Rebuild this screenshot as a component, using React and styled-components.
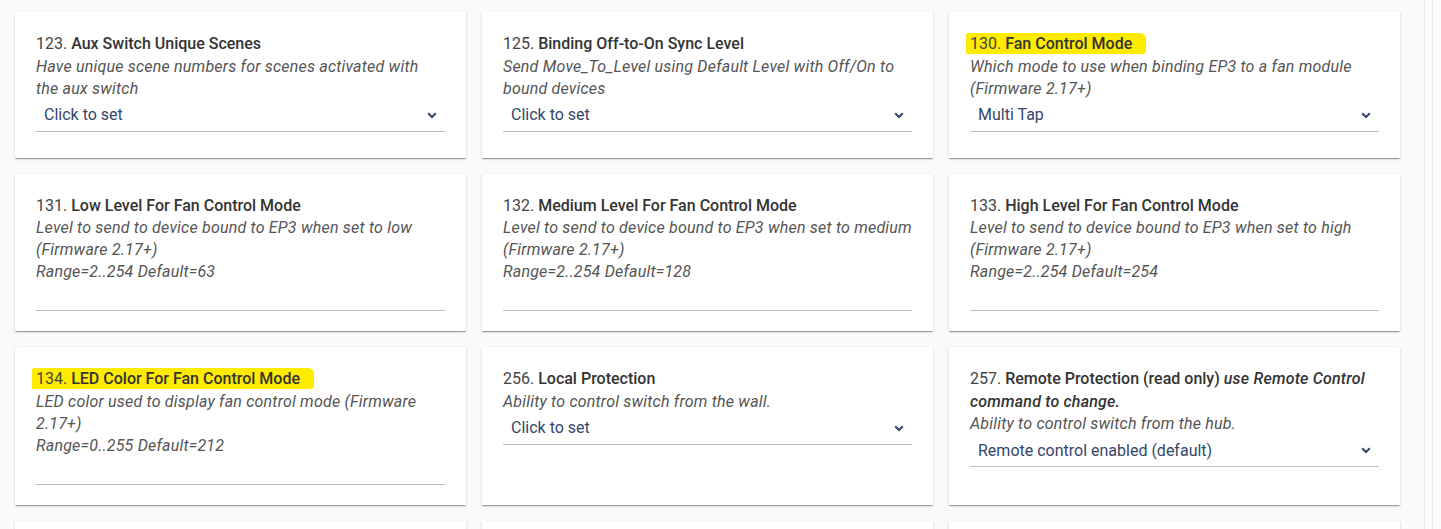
import React from 'react'
import styled, { createGlobalStyle } from 'styled-components'

const GlobalStyle = createGlobalStyle`
  html, body {
    margin: 0;
    padding: 0;
    background: #fafafa;
    font-family: Roboto, "Liberation Sans", sans-serif;
    overflow: hidden;
  }
`

const Page = styled.div`
  display: flex;
  height: 529px;
`

const Main = styled.div`
  width: 1424px;
  padding: 12px 0 0 15px;
  box-sizing: border-box;
`

const Grid = styled.div`
  display: grid;
  grid-template-columns: repeat(3, 451px);
  gap: 16px;
`

const ScrollTrack = styled.div`
  flex: 1;
  border-left: 1px solid #e6e6e6;
  background: #fbfbfb;
  display: flex;
  padding-left: 7px;
`

const TrackLine = styled.div`
  width: 1px;
  background: #e9e9e9;
`

const Card = styled.div`
  background: #fff;
  padding: 21px 21px 18px 21px;
  box-shadow: 0 2px 1px -1px rgba(0,0,0,0.2), 0 1px 1px 0 rgba(0,0,0,0.14), 0 1px 3px 0 rgba(0,0,0,0.12);
  font-size: 16px;
  line-height: 22px;
  min-height: 100px;
`

const Title = styled.div`
  color: #444;
  line-height: 22.5px;
`

const Mark = styled.span`
  background: ${p => (p.$on ? '#ffeb00' : 'transparent')};
  padding: ${p => (p.$on ? '1px 14px 1px 4px' : '0')};
  margin-left: ${p => (p.$on ? '-4px' : '0')};
  border-radius: 2px 6px 3px 1px;
`

const Name = styled.span`
  font-weight: 500;
  color: #333;
`

const Note = styled.span`
  font-style: italic;
  font-weight: 500;
  color: #333;
  letter-spacing: 0.2px;
`

const Desc = styled.div`
  font-style: italic;
  color: #555;
  letter-spacing: 0.2px;
`

const SelectBox = styled.div`
  display: flex;
  align-items: center;
  justify-content: space-between;
  height: 31px;
  border-bottom: 1px solid #bdbdbd;
  padding: 0 8px 0 8px;
  color: #34466b;
  margin-bottom: 8px;
`

const TextField = styled.div`
  height: 27px;
  border-bottom: 1px solid #bdbdbd;
  margin-bottom: 2px;
`

function Chevron() {
  return (
    <svg width="10" height="7" viewBox="0 0 10 7">
      <path d="M1.2 1.2 L5 5 L8.8 1.2" fill="none" stroke="#34466b" strokeWidth="2" />
    </svg>
  )
}

const items = [
  { n: 123, name: 'Aux Switch Unique Scenes', desc: ['Have unique scene numbers for scenes activated with', 'the aux switch'], select: 'Click to set' },
  { n: 125, name: 'Binding Off-to-On Sync Level', desc: ['Send Move_To_Level using Default Level with Off/On to bound devices'], select: 'Click to set' },
  { n: 130, name: 'Fan Control Mode', hl: true, desc: ['Which mode to use when binding EP3 to a fan module (Firmware 2.17+)'], select: 'Multi Tap' },
  { n: 131, name: 'Low Level For Fan Control Mode', desc: ['Level to send to device bound to EP3 when set to low (Firmware 2.17+)', 'Range=2..254 Default=63'] },
  { n: 132, name: 'Medium Level For Fan Control Mode', desc: ['Level to send to device bound to EP3 when set to medium (Firmware 2.17+)', 'Range=2..254 Default=128'] },
  { n: 133, name: 'High Level For Fan Control Mode', desc: ['Level to send to device bound to EP3 when set to high (Firmware 2.17+)', 'Range=2..254 Default=254'] },
  { n: 134, name: 'LED Color For Fan Control Mode', hl: true, desc: ['LED color used to display fan control mode (Firmware 2.17+)', 'Range=0..255 Default=212'] },
  { n: 256, name: 'Local Protection', desc: ['Ability to control switch from the wall.'], select: 'Click to set' },
  { n: 257, name: 'Remote Protection (read only)', note: 'use Remote Control command to change.', desc: ['Ability to control switch from the hub.'], select: 'Remote control enabled (default)' },
  { n: 258 }, { n: 259 }, { n: 260 },
]

export default function App() {
  return (
    <Page>
      <GlobalStyle />
      <Main>
        <Grid>
          {items.map(it => (
            <Card key={it.n}>
              {it.name && (
                <>
                  <Title>
                    <Mark $on={it.hl}>
                      {it.n}. <Name>{it.name}</Name>
                    </Mark>
                    {it.note && <> <Note>{it.note}</Note></>}
                  </Title>
                  {it.desc.map((d, i) => <Desc key={i}>{d}</Desc>)}
                  {it.select ? (
                    <SelectBox>
                      <span>{it.select}</span>
                      <Chevron />
                    </SelectBox>
                  ) : (
                    <TextField />
                  )}
                </>
              )}
            </Card>
          ))}
        </Grid>
      </Main>
      <ScrollTrack>
        <TrackLine />
      </ScrollTrack>
    </Page>
  )
}
